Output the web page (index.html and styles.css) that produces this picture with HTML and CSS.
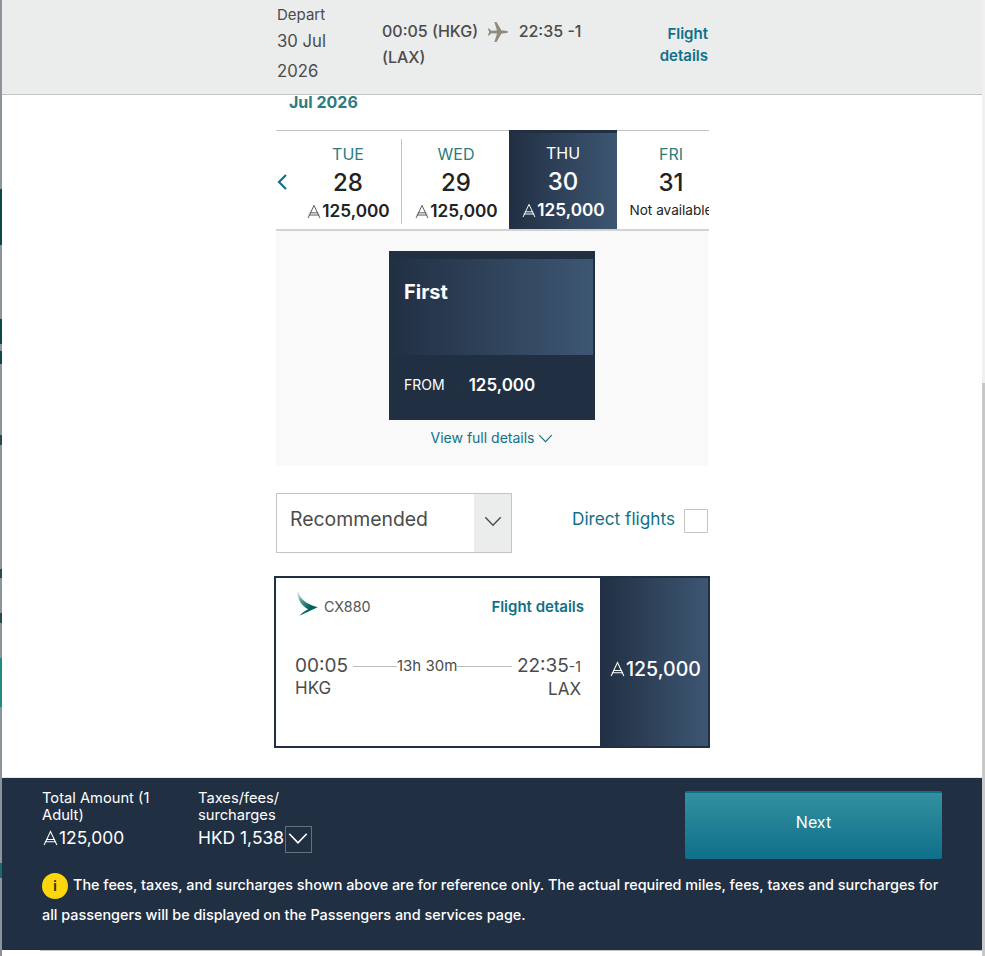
FILE: index.html
```html
<!DOCTYPE html>
<html lang="en">
<head>
<meta charset="utf-8">
<title>Select flight</title>
<link rel="stylesheet" href="styles.css">
</head>
<body>
<svg class="defs" width="0" height="0" aria-hidden="true">
  <symbol id="miles" viewBox="0 0 16 16">
    <path d="M1.2 15.5 L8 1 L14.8 15.5 M3.2 9.5 H12.8 M2 12 H14" fill="none" stroke="currentColor" stroke-width="1.1"/>
  </symbol>
  <symbol id="chev" viewBox="0 0 16 10">
    <path d="M1 1.2 L8 8.4 L15 1.2" fill="none" stroke="currentColor" stroke-width="1.3"/>
  </symbol>
</svg>
<div class="page">
  <div class="backdrop"></div>
  <div class="modal">
    <header class="summary">
      <div class="summary-inner">
        <div class="depart">
          <div class="depart-label">Depart</div>
          <div class="depart-date">30 Jul<br>2026</div>
        </div>
        <div class="route">
          <span>00:05 (HKG)</span>
          <svg class="plane" width="22" height="22" viewBox="0 0 22 22"><path d="M21 11 C21 10 18 9.6 14.5 9.6 L9.5 1 L7.4 1 L10 9.6 L4.4 9.8 L2 7.4 L.8 7.4 L2.2 11 L.8 14.6 L2 14.6 L4.4 12.2 L10 12.4 L7.4 21 L9.5 21 L14.5 12.4 C18 12.4 21 12 21 11 Z" fill="#8f8b7d"/></svg>
          <span>22:35 -1 (LAX)</span>
        </div>
        <a class="summary-link">Flight<br>details</a>
      </div>
    </header>
    <main class="content">
      <h2 class="month">Jul 2026</h2>
      <div class="dates">
        <svg class="prev" width="10" height="16" viewBox="0 0 10 16"><path d="M9 1 L2 8 L9 15" fill="none" stroke="#0f7189" stroke-width="2.2"/></svg>
        <div class="date date-line"><span class="dow">TUE</span><span class="day">28</span><span class="fare"><svg class="mi"><use href="#miles"/></svg>125,000</span></div>
        <div class="date date-shift"><span class="dow">WED</span><span class="day">29</span><span class="fare"><svg class="mi"><use href="#miles"/></svg>125,000</span></div>
        <div class="date date-active"><span class="dow">THU</span><span class="day">30</span><span class="fare"><svg class="mi"><use href="#miles"/></svg>125,000</span></div>
        <div class="date"><span class="dow">FRI</span><span class="day">31</span><span class="na">Not available</span></div>
      </div>
      <section class="cabin-panel">
        <div class="cabin">
          <div class="cabin-head">First</div>
          <div class="cabin-foot"><span class="from">FROM</span><svg class="mi-dark"><use href="#miles"/></svg><span class="from-price">125,000</span></div>
        </div>
        <a class="full">View full details <svg class="full-chev" width="15" height="9"><use href="#chev"/></svg></a>
      </section>
      <div class="filters">
        <div class="select"><span class="select-text">Recommended</span><span class="select-btn"><svg width="18" height="11"><use href="#chev"/></svg></span></div>
        <label class="direct">Direct flights<span class="check"></span></label>
      </div>
      <article class="flight">
        <div class="flight-main">
          <div class="flight-top">
            <svg class="logo" width="24" height="26" viewBox="0 0 24 26">
              <defs><linearGradient id="wing" x1="0.05" y1="0" x2="0.55" y2="0.7"><stop offset="0" stop-color="#dfeeec"/><stop offset="0.5" stop-color="#4a9794"/><stop offset="1" stop-color="#00615e"/></linearGradient></defs>
              <path d="M1.3 1.7 L2.3 1.7 C4 8 8 13 21.7 17.3 L3.3 25.7 C6 23 9 21 12.3 19.3 C6 16 1.5 10 1.3 1.7 Z" fill="url(#wing)"/>
            </svg>
            <span class="code">CX880</span>
            <a class="flight-link">Flight details</a>
          </div>
          <div class="times">
            <div class="end"><span class="time">00:05</span><span class="port">HKG</span></div>
            <div class="dur"><i class="dur-left"></i><span>13h 30m</span><i></i></div>
            <div class="end end-right"><span class="time">22:35<small>-1</small></span><span class="port">LAX</span></div>
          </div>
        </div>
        <div class="flight-price"><svg class="mi-lg"><use href="#miles"/></svg>125,000</div>
      </article>
    </main>
    <footer class="bar">
      <div class="bar-top">
        <div class="amount amount-total">
          <div class="amount-label">Total Amount (1 Adult)</div>
          <div class="amount-value"><svg class="mi-lg"><use href="#miles"/></svg>125,000</div>
        </div>
        <div class="amount amount-tax">
          <div class="amount-label">Taxes/fees/<br>surcharges</div>
          <div class="amount-value">HKD 1,538<span class="toggle"><svg width="20" height="13"><use href="#chev"/></svg></span></div>
        </div>
        <button class="next">Next</button>
      </div>
      <p class="note"><span class="info">i</span>The fees, taxes, and surcharges shown above are for reference only. The actual required miles, fees, taxes and surcharges for all passengers will be displayed on the Passengers and services page.</p>
    </footer>
    <div class="bar-edge"></div>
  </div>
  <div class="scrollbar"><div class="thumb"></div></div>
</div>
</body>
</html>
```
FILE: styles.css
```css
* { box-sizing: border-box; }
html, body { margin: 0; height: 100%; overflow: hidden; }
body { font-family: Inter, "Liberation Sans", sans-serif; color: #333; background: #fff; }
a { color: #0f7189; }
.defs { display: block; height: 0; }
.page { display: flex; height: 956px; width: 985px; }

.backdrop {
  width: 2px;
  flex: none;
  background: linear-gradient(180deg,
    #8d9499 189px, #0c4a47 189px, #0c4a47 245px,
    #8d9499 245px, #8d9499 319px, #0c4a47 319px, #0c4a47 344px,
    #8d9499 344px, #8d9499 351px, #0c4a47 351px, #0c4a47 364px,
    #8d9499 364px, #8d9499 435px, #2b4a4c 435px, #2b4a4c 445px,
    #8d9499 445px, #8d9499 569px, #2b4a4c 569px, #2b4a4c 578px,
    #8d9499 578px, #8d9499 613px, #2b4a4c 613px, #2b4a4c 623px,
    #8d9499 623px, #8d9499 658px, #1f8a84 658px, #1f8a84 707px,
    #8d9499 707px, #8d9499 863px, #1a6a70 863px, #1a6a70 878px,
    #8d9499 878px);
}

.modal { flex: 1; display: flex; flex-direction: column; min-width: 0; }
.scrollbar { width: 3px; flex: none; background: #f0f0f0; padding-top: 383px; }
.thumb { height: 573px; background: #c8c8c8; }

.summary { height: 95px; flex: none; background: #ebecec; border-bottom: 1px solid #c4c4c4; padding-left: 274px; }
.summary-inner { width: 432px; height: 94px; display: flex; }
.depart { width: 106px; padding: 6px 0 0 1px; color: #4b4b4b; }
.depart-label { font-size: 15px; line-height: 18px; }
.depart-date { font-size: 16.7px; line-height: 30px; margin-top: 2px; }
.route { width: 224px; padding-top: 18px; font-size: 16px; line-height: 26px; font-weight: 500; color: #4b4b4b; }
.plane { vertical-align: -6px; margin: 0 5px 0 5px; }
.summary-link { flex: 1; text-align: right; font-size: 15px; font-weight: 600; line-height: 22px; padding-top: 23px; }

.content { flex: none; padding-left: 274px; height: 653px; }
.month { margin: 0; padding-left: 13px; height: 35px; font-size: 16px; line-height: 15px; font-weight: 700; color: #2c7c7e; }
.dates { width: 433px; height: 101px; display: flex; overflow: hidden; border-bottom: 2px solid #d2d2d2; background: linear-gradient(#c4c4c4, #c4c4c4) top / 100% 1px no-repeat; }
.prev { flex: none; margin: 44px 6px 0 1px; }
.date { flex: 0 0 108px; display: flex; flex-direction: column; align-items: center; color: #222; padding-top: 15px; }
.date-line { flex-basis: 109px; margin-right: -1px; padding-left: 2px; border-right: 1px solid #c4c4c4; height: 85px; margin-top: 9px; padding-top: 6px; }
.date-shift { padding-left: 2px; }
.date-active { color: #fff; background: linear-gradient(90deg, #212f43, #3d5672); border-top: 3px solid #212f43; padding-top: 11px; height: 99px; }
.dow { font-size: 16px; line-height: 18px; color: #2c7c7e; }
.date-active .dow { color: #fff; }
.day { font-size: 24px; line-height: 30px; font-weight: 500; margin-top: 5px; }
.fare { font-size: 17.2px; line-height: 22px; font-weight: 600; margin-top: 2px; padding-left: 1px; display: flex; align-items: center; white-space: nowrap; }
.na { font-size: 13.6px; line-height: 20px; margin-top: 2px; white-space: nowrap; }
.mi { width: 14px; height: 15px; margin-right: 1px; color: #555; }
.date-active .mi { color: #fff; }

.cabin-panel { width: 432px; height: 235px; background: #f9f9f9; padding-top: 20px; display: flex; flex-direction: column; align-items: center; }
.cabin { width: 206px; height: 169px; background: #212f43; padding: 8px 2px 0 0; }
.cabin-head { height: 96px; background: linear-gradient(90deg, #212f43, #3d5672); color: #fff; font-size: 20px; font-weight: 700; padding: 20px 0 0 15px; line-height: 26px; }
.cabin-foot { display: flex; align-items: center; color: #fff; padding: 19px 0 0 15px; }
.from { font-size: 14px; line-height: 22px; }
.mi-dark { width: 14px; height: 15px; margin: 0 2px 0 8px; color: #2a3040; }
.from-price { font-size: 17px; font-weight: 600; }
.full { margin-top: 9px; font-size: 14px; line-height: 18px; }
.full-chev { vertical-align: 0; }

.filters { width: 432px; margin-top: 27px; height: 60px; display: flex; }
.select { width: 236px; height: 60px; border: 1px solid #c4c4c4; display: flex; }
.select-text { flex: 1; font-size: 19.4px; line-height: 50px; padding-left: 13px; color: #4b4b4b; }
.select-btn { width: 37px; background: #ebecec; display: flex; justify-content: center; padding-top: 22px; color: #4b4b4b; }
.direct { flex: 1; display: flex; justify-content: flex-end; color: #0f7189; font-size: 17.2px; line-height: 20px; padding-top: 16px; }
.check { width: 24px; height: 24px; margin-left: 9px; background: #fff; border: 1px solid #c4c4c4; border-radius: 1px; }

.flight { width: 436px; height: 172px; margin: 23px 0 0 -2px; border: 2px solid #212f43; display: flex; }
.flight-main { flex: 1; padding: 14px 16px 0 19px; }
.flight-top { display: flex; align-items: center; height: 28px; }
.logo { margin: -6px 0 0 1px; flex: none; }
.code { font-size: 14.3px; color: #555; margin-left: 4px; flex: 1; }
.flight-link { font-size: 15px; font-weight: 600; }
.times { display: flex; margin-top: 34px; color: #4b4b4b; }
.end { display: flex; flex-direction: column; flex: none; }
.end-right { align-items: flex-end; padding-right: 3px; }
.time { font-size: 19px; line-height: 23px; font-weight: 400; }
.time small { font-size: 14px; }
.port { font-size: 17px; line-height: 21px; margin-top: 1px; }
.dur { flex: 1; display: flex; align-items: center; height: 23px; margin: 0 5px; font-size: 15px; white-space: nowrap; }
.dur i { flex: 1; height: 1px; background: #bdbdbd; margin-top: 2px; }
.dur .dur-left { flex: 0 0 44px; }
.flight-price { width: 108px; flex: none; background: linear-gradient(90deg, #212f43, #3d5672); color: #fff; font-size: 19.5px; font-weight: 500; display: flex; align-items: center; padding: 14px 0 0 10px; }
.mi-lg { width: 15px; height: 16px; color: #fff; margin-right: 1px; flex: none; }

.bar { margin-top: 30px; height: 172px; flex: none; background: #212f43; color: #fff; padding: 11px 40px 0; box-shadow: 0 -1px 0 #e6e6e6; }
.bar-edge { height: 1px; margin-left: 38px; background: #c4c4c4; flex: none; }
.bar-top { display: flex; height: 81px; }
.amount-total { width: 156px; }
.amount-tax { width: 487px; }
.amount-label { font-size: 14.7px; line-height: 17px; width: 125px; margin-top: 1px; }
.amount-value { font-size: 17.4px; line-height: 24px; margin-top: 2px; display: flex; align-items: center; height: 24px; }
.toggle { width: 27px; height: 27px; border: 1px solid #66707f; display: flex; justify-content: center; padding-top: 5px; margin-top: 3px; margin-left: 1px; color: #fff; }
.amount-total .amount-value { padding-left: 1px; }
.next { width: 257px; height: 68px; margin-top: 2px; padding: 0 0 8px; border: 0; border-top: 2px solid #0f7189; border-radius: 2px; background: linear-gradient(#34909f, #0e6f8a); color: #fff; font: 400 16px Inter, "Liberation Sans", sans-serif; }
.note { margin: 0; font-size: 14.4px; line-height: 30px; font-weight: 500; width: 905px; }
.info { display: inline-block; width: 26px; height: 26px; border-radius: 50%; background: #fdd60b; color: #333; font-weight: 700; text-align: center; line-height: 26px; font-size: 13px; margin-right: 5px; vertical-align: -1px; }
```
